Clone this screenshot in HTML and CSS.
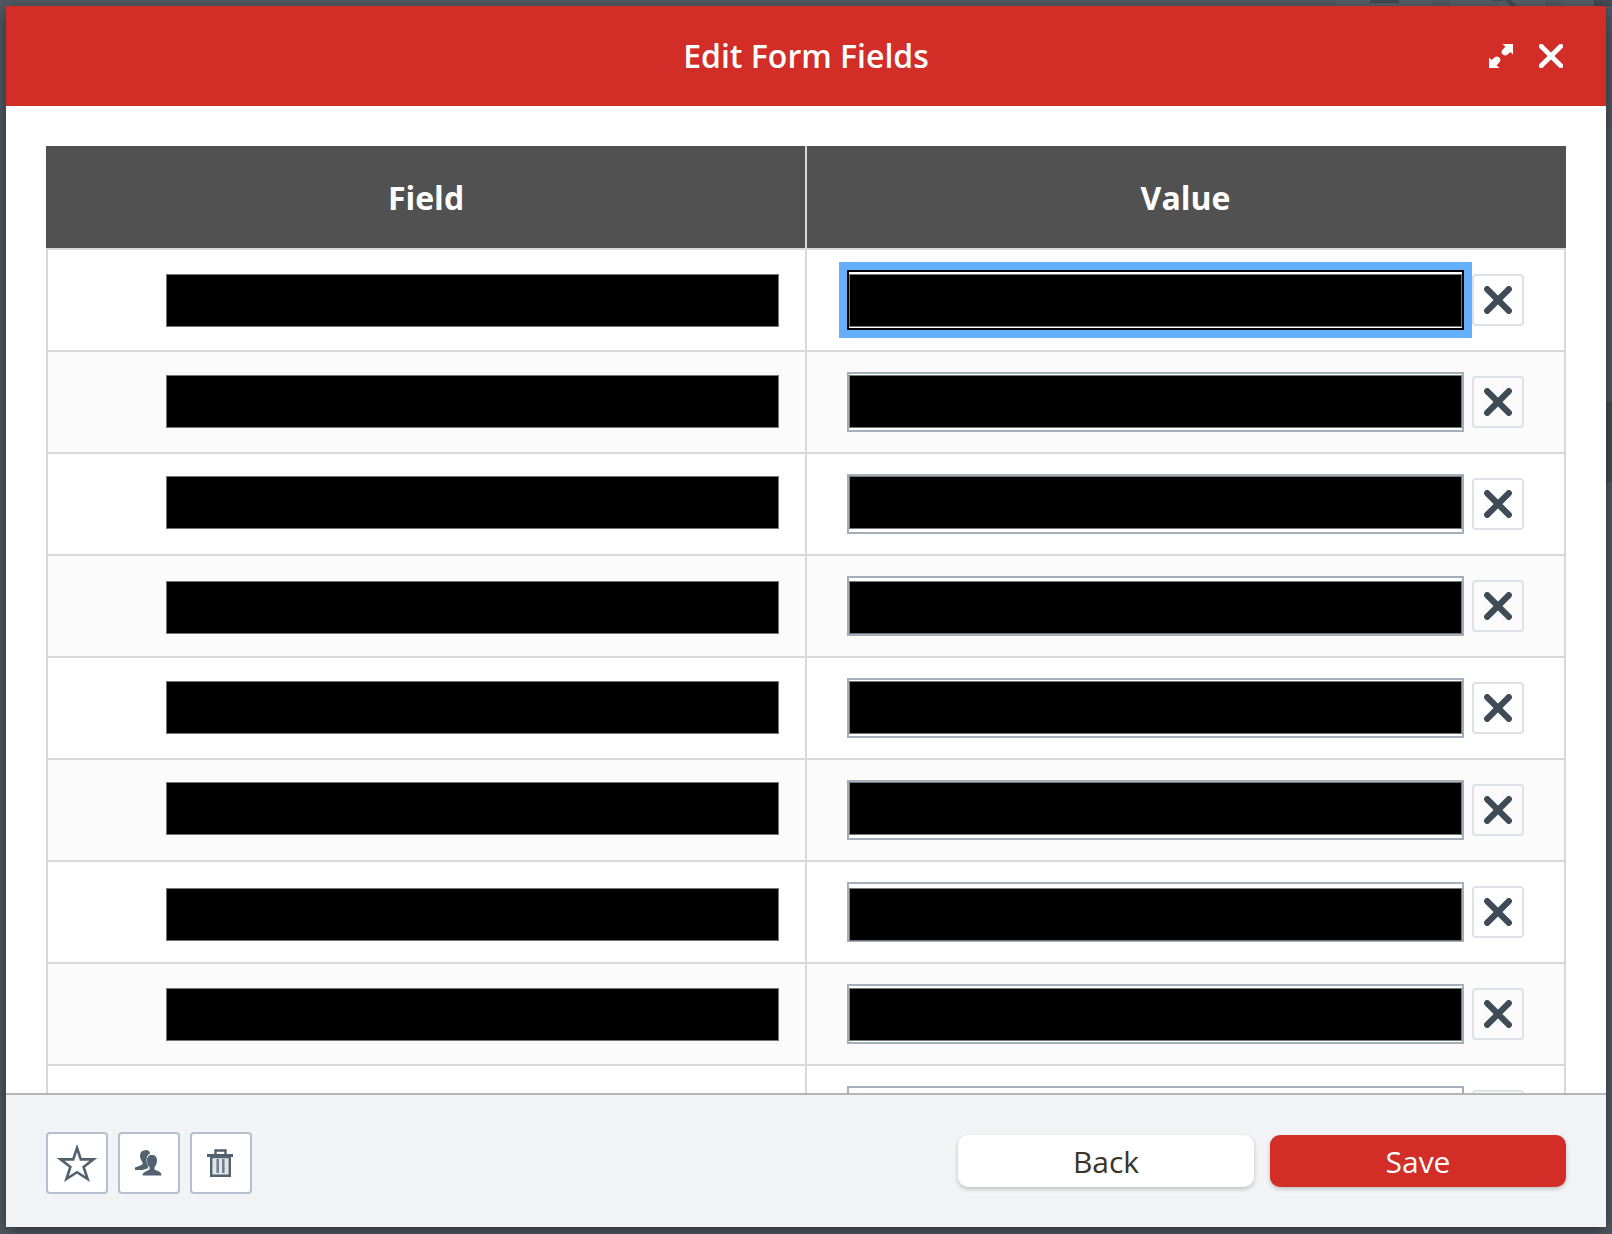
FILE: index.html
```html
<!DOCTYPE html>
<html lang="en">
<head>
<meta charset="utf-8">
<title>Edit Form Fields</title>
<link rel="stylesheet" href="styles.css">
</head>
<body>
<svg class="backdrop" width="1612" height="1234" viewBox="0 0 1612 1234" aria-hidden="true">
  <path d="M1336 0h96v8h-96zM1450 0h96v8h-96zM1563 0h49v8h-49z" fill="#5a616b"/>
  <path d="M1371 0h27l2 3h-31zM1490 0h14l-4 1h-6zM1505 0h6l6 6h-6zM1594 0h18v7h-18z" fill="#444c55"/>
  <path d="M1606 30h6v97h-6z" fill="#525860"/>
  <path d="M1606 402h6v80h-6z" fill="#454d55"/>
</svg>
<svg width="0" height="0" class="defs" aria-hidden="true">
  <symbol id="cross" viewBox="0 0 28 28"><path d="M3.2 3.2l21.600 21.600M24.800 3.200L3.200 24.800" fill="none" stroke="currentColor" stroke-width="6.200" stroke-linecap="round"/></symbol>
</svg>
<main class="modal">
  <header class="modal-header">
    <h1 class="title">Edit Form Fields</h1>
    <div class="window-actions">
      <button class="plain" aria-label="Expand"><svg width="24" height="24" viewBox="0 0 24 24"><path d="M13.500 0H24v10.500l-2.600-2.600-3.400 3.200q-2.200 1-4.200-.6t-.8-4.200l3.400-3.500zM10.500 24H0V13.500l2.600 2.600 3.400-3.200q2.200-1 4.200.6t.8 4.200L7.600 21.200z" fill="#fff"/></svg></button>
      <button class="plain" aria-label="Close"><svg width="24" height="24" viewBox="0 0 24 24"><path d="M2.200 2.200l19.600 19.600M21.800 2.200L2.200 21.800" fill="none" stroke="#fff" stroke-width="4.800" stroke-linecap="round"/></svg></button>
    </div>
  </header>
  <section class="modal-body">
    <div class="table">
      <div class="head"><div class="th">Field</div><div class="th">Value</div></div>
      <div class="row"><div class="field"><div class="bar s24"></div></div><div class="value"><div class="input focused"><div class="bar s2"></div></div><button class="remove" aria-label="Remove"><svg width="28" height="28"><use href="#cross"/></svg></button></div></div>
      <div class="row"><div class="field"><div class="bar s23"></div></div><div class="value"><div class="input"><div class="bar s1"></div></div><button class="remove" aria-label="Remove"><svg width="28" height="28"><use href="#cross"/></svg></button></div></div>
      <div class="row"><div class="field"><div class="bar s22"></div></div><div class="value"><div class="input"><div class="bar"></div></div><button class="remove" aria-label="Remove"><svg width="28" height="28"><use href="#cross"/></svg></button></div></div>
      <div class="row"><div class="field"><div class="bar s25"></div></div><div class="value"><div class="input"><div class="bar s3"></div></div><button class="remove" aria-label="Remove"><svg width="28" height="28"><use href="#cross"/></svg></button></div></div>
      <div class="row"><div class="field"><div class="bar s23"></div></div><div class="value"><div class="input"><div class="bar s1"></div></div><button class="remove" aria-label="Remove"><svg width="28" height="28"><use href="#cross"/></svg></button></div></div>
      <div class="row"><div class="field"><div class="bar s22"></div></div><div class="value"><div class="input"><div class="bar"></div></div><button class="remove" aria-label="Remove"><svg width="28" height="28"><use href="#cross"/></svg></button></div></div>
      <div class="row"><div class="field"><div class="bar s26"></div></div><div class="value"><div class="input"><div class="bar s4"></div></div><button class="remove" aria-label="Remove"><svg width="28" height="28"><use href="#cross"/></svg></button></div></div>
      <div class="row"><div class="field"><div class="bar s24"></div></div><div class="value"><div class="input"><div class="bar s2"></div></div><button class="remove" aria-label="Remove"><svg width="28" height="28"><use href="#cross"/></svg></button></div></div>
      <div class="row"><div class="field"></div><div class="value"><div class="input"></div><button class="remove" aria-label="Remove"><svg width="28" height="28"><use href="#cross"/></svg></button></div></div>
    </div>
  </section>
  <footer class="modal-footer">
    <div class="tools">
      <button class="tool" aria-label="Favorite"><svg width="58" height="58" viewBox="0 0 58 58"><path d="M29 14L32.800 25.400H45.500L35.600 33L39.600 45L29 38.200L18.400 45L22.400 33L12.500 25.400H25.200z" fill="none" stroke="#52616e" stroke-width="2.600"/></svg></button>
      <button class="tool" aria-label="Share"><svg width="58" height="58" viewBox="0 0 58 58"><g fill="#52616e"><path d="M21.500 17.500q2-1.500 5-1.500 3.500.5 3.500 3.500-4 2-3.500 7.500.3 3 2 5l-1 2.500-5 1.500H15v-2.500l6.500-2.500q1.500-1 1-2.500-2.500-3-2.500-6.500t1.500-4.500z"/><path d="M32 21c3.300 0 5 2 5 5.500 0 3-1 5-2.500 6.500v2.500l5.500 2.500q1.500 1 1.500 3.500H22.500q0-2 1.500-3l5.500-3V33c-1.500-1.500-2.500-3.500-2.500-6.500 0-3.500 1.500-5.500 5-5.500z"/></g></svg></button>
      <button class="tool" aria-label="Delete"><svg width="58" height="58" viewBox="0 0 58 58"><path d="M23.500 21v-4.500h10V21" fill="none" stroke="#52616e" stroke-width="2.400"/><path d="M15 20h26v3H15z" fill="#52616e"/><path d="M19.200 23h18.600v18.800H19.200z" fill="#e3e6e9" stroke="#52616e" stroke-width="2.400"/><path d="M25.700 25v14M31.300 25v14" fill="none" stroke="#74818c" stroke-width="2.600"/></svg></button>
    </div>
    <div class="actions"><button class="btn">Back</button><button class="btn primary">Save</button></div>
  </footer>
</main>
</body>
</html>
```
FILE: styles.css
```css
* { box-sizing: border-box; }
body {
  margin: 0;
  width: 1612px;
  height: 1234px;
  padding: 6px 6px 7px;
  overflow: hidden;
  background: #525b64;
  font-family: "Open Sans", "Noto Sans", sans-serif;
}
button { font: inherit; padding: 0; }
svg { display: block; flex: none; }
.backdrop { position: absolute; left: 0; top: 0; }
.defs { position: absolute; }
.modal {
  position: relative;
  display: flex;
  flex-direction: column;
  height: 1221px;
  background: #fff;
  box-shadow: 0 4px 16px rgba(0, 0, 0, .5);
}
.modal-header {
  flex: none;
  display: grid;
  grid-template-columns: 1fr auto 1fr;
  align-items: center;
  height: 100px;
  padding-right: 43px;
  padding-left: 43px;
  background: #d22d27;
  border-bottom: 1px solid #c92c22;
}
.title {
  grid-column: 2;
  margin: 0;
  font-size: 32px;
  line-height: 44px;
  font-weight: 600;
  color: #fff;
}
.window-actions { display: flex; justify-content: flex-end; gap: 26px; }
.plain { border: 0; background: none; }
.modal-body { flex: 1; min-height: 0; overflow: hidden; padding: 40px 40px 0; }
.head, .row { display: grid; grid-template-columns: 759px 761px; }
.head { height: 102px; background: #515151; }
.th {
  display: flex;
  align-items: center;
  justify-content: center;
  padding-left: 1px;
  font-size: 32px;
  font-weight: 700;
  color: #fff;
}
.th + .th { padding: 0 2px 0 0; border-left: 2px solid #d8d8d8; }
.row {
  height: 102px;
  border: 2px solid #d8d8d8;
  border-bottom: 0;
  grid-template-columns: 757px 759px;
}
.row:nth-child(odd) { background: #fbfbfb; }
.field { padding: 0 26px 0 118px; }
.value {
  display: flex;
  align-items: flex-start;
  gap: 8px;
  padding: 20px 0 0 40px;
  border-left: 2px solid #d8d8d8;
}
.bar { height: 53px; background: #000; border: 1px solid #777; }
.field, .input { display: flex; align-items: flex-start; }
.bar { flex: 1; }
.s1 { margin-top: 1px; }
.s2 { margin-top: 2px; }
.s3 { margin-top: 3px; }
.s4 { margin-top: 4px; }
.s22 { margin-top: 22px; }
.s23 { margin-top: 23px; }
.s24 { margin-top: 24px; }
.s25 { margin-top: 25px; }
.s26 { margin-top: 26px; }
.input { width: 617px; height: 60px; border: 2px solid #a5aebb; background: #fff; }
.input.focused { border-color: #000; outline: 8px solid #64affc; }
.remove {
  display: flex;
  align-items: center;
  justify-content: center;
  width: 52px;
  height: 52px;
  margin-top: 4px;
  border: 2px solid #dee1e6;
  border-radius: 4px;
  background: transparent;
  color: #3f4c57;
}
.modal-footer {
  flex: none;
  display: flex;
  justify-content: space-between;
  align-items: flex-start;
  height: 134px;
  padding: 37px 40px 0;
  border-top: 2px solid #b5b5b6;
  background: #f2f3f5;
}
.tools { display: flex; gap: 10px; }
.tool {
  width: 62px;
  height: 62px;
  border: 2px solid #b6bfd2;
  border-radius: 4px;
  background: #fff;
}
.actions { display: flex; gap: 16px; padding-top: 3px; }
.btn {
  width: 296px;
  height: 52px;
  border: 0;
  border-radius: 10px;
  background: #fff;
  box-shadow: 0 2px 4px rgba(0, 0, 0, .22);
  font-size: 30px;
  line-height: 54px;
  color: #39342a;
}
.btn.primary { background: #d22d27; color: #fff; }
```
